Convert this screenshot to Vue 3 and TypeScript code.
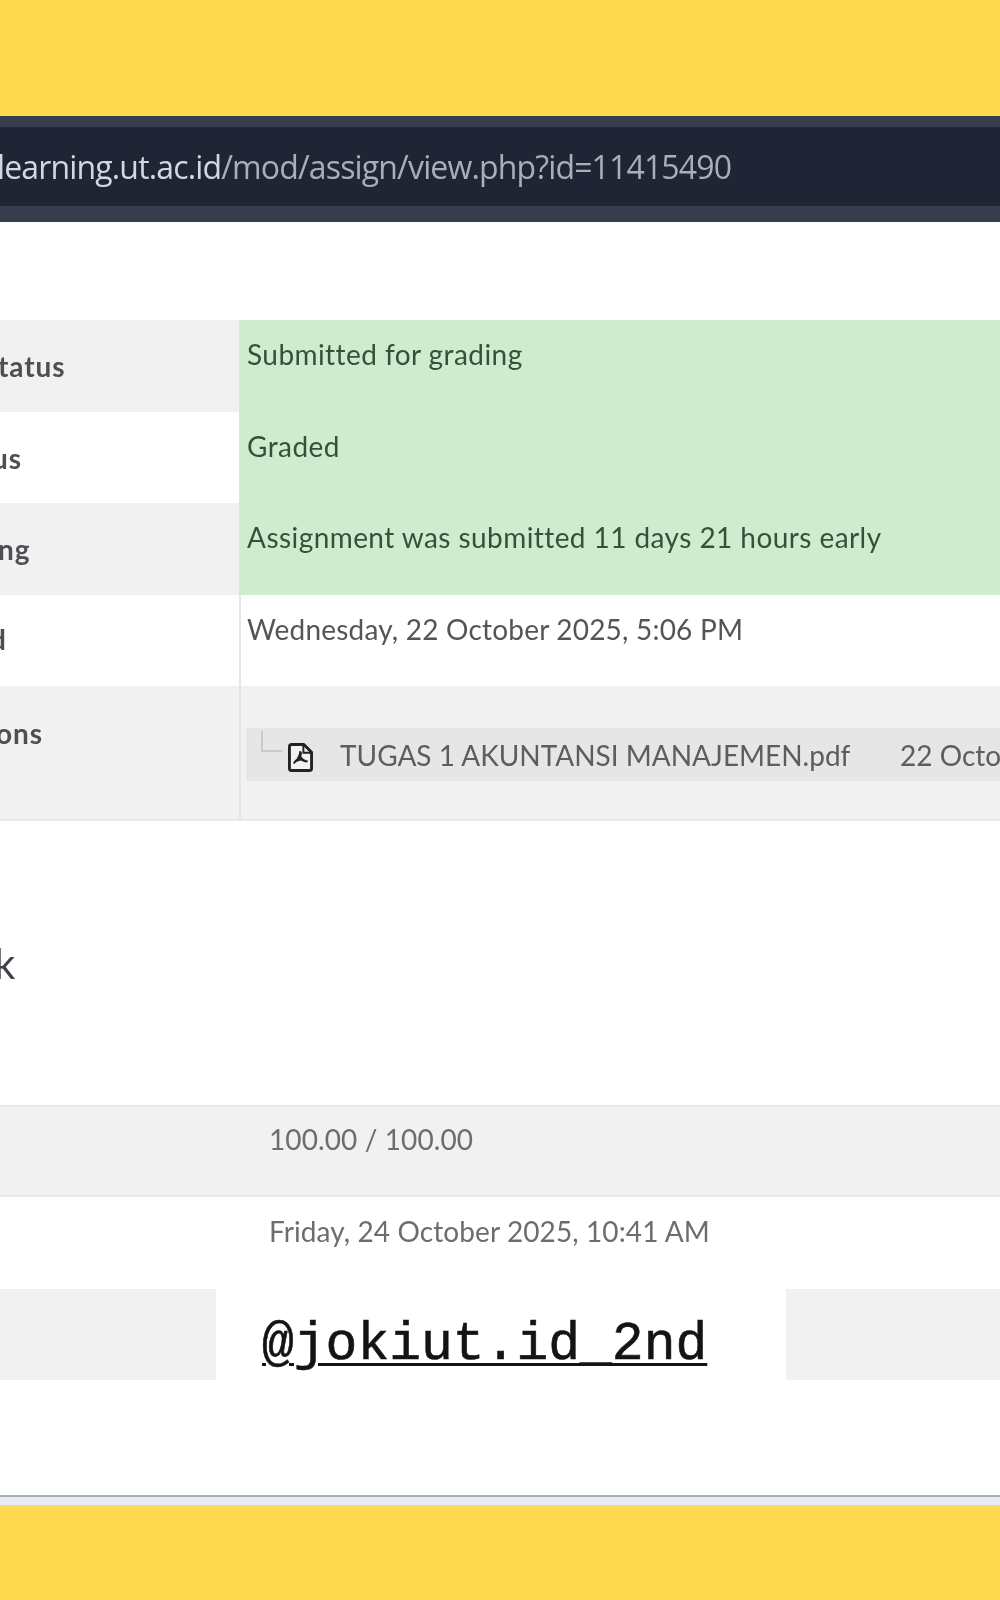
<script setup lang="ts">
interface StatusRow {
  label: string
  value: string
  labelClass: string
  striped: boolean
}

const statusRows: StatusRow[] = [
  { label: 'tatus', value: 'Submitted for grading', labelClass: 'w-status', striped: true },
  { label: 'us', value: 'Graded', labelClass: 'w-grading', striped: false },
  { label: 'ng', value: 'Assignment was submitted 11 days 21 hours early', labelClass: 'w-time', striped: true },
]
</script>

<template>
  <div class="page">
    <div class="band top-band"></div>

    <div class="urlbar">
      <div class="urlbar-inner">
        <span class="url"><span class="host">learning.ut.ac.id</span>/mod/assign/view.php?id=11415490</span>
      </div>
    </div>

    <div class="sheet">
      <section class="status-table">
        <div v-for="row in statusRows" :key="row.label" class="row" :class="{ striped: row.striped }">
          <div class="label" :class="row.labelClass">{{ row.label }}</div>
          <div class="value ok">{{ row.value }}</div>
        </div>

        <div class="row">
          <div class="label cut-d">d</div>
          <div class="value divided modified">Wednesday, 22 October 2025, 5:06 PM</div>
        </div>

        <div class="row striped files-row">
          <div class="label files-label">ons</div>
          <div class="value divided files-value">
            <div class="file">
              <span class="tree"></span>
              <svg class="pdf" viewBox="0 0 26 30" width="25" height="29" aria-hidden="true">
                <path d="M3.500 1.500h13l8 8v17a2 2 0 0 1-2 2h-19a2 2 0 0 1-2-2v-23a2 2 0 0 1 2-2z" fill="#f2f2f2" stroke="#222" stroke-width="3" stroke-linejoin="round" />
                <path d="M16 2v8h8" fill="none" stroke="#222" stroke-width="2" />
                <path d="M13 8.500c1.800 0 1.800 2.500.8 5.300 1.300 2.300 3.200 4 7 4.700.4 2-3.200 2.300-7.400-.3-2.300.4-4.900 1.300-6.900 3.600-1.700-.3-1.600-2.200 2.300-5.300 1.700-2.400 3-5.700 3-7.900-.1-.4.5-.6 1.200-.1z" fill="#222" />
              </svg>
              <span class="file-name">TUGAS 1 AKUNTANSI MANAJEMEN.pdf</span>
              <span class="file-date">22 October 2025, 5:06 PM</span>
            </div>
          </div>
        </div>
      </section>

      <h3 class="feedback">k</h3>

      <section class="grade-table">
        <div class="grade-row striped">
          <div class="grade-value">100.00 / 100.00</div>
        </div>
        <div class="grade-row">
          <div class="grade-value">Friday, 24 October 2025, 10:41 AM</div>
        </div>
        <div class="last-row">
          <div class="stripe"></div>
          <div class="watermark"><span>@jokiut.id_2nd</span></div>
          <div class="stripe"></div>
        </div>
      </section>
    </div>

    <div class="band bottom-band"></div>
  </div>
</template>

<style>
html, body {
  margin: 0;
  background: #ffd94f;
}
</style>

<style scoped>
.page {
  width: 1000px;
  height: 1600px;
  overflow: hidden;
  display: flex;
  flex-direction: column;
  font-family: "Lato", "Noto Sans", sans-serif;
  filter: blur(0.45px);
}

.band {
  background: #ffd94f;
}

.top-band {
  height: 116px;
}

.bottom-band {
  height: 95px;
}

.urlbar {
  height: 106px;
  box-sizing: border-box;
  padding: 11px 0 16px;
  background: #373d4b;
}

.urlbar-inner {
  height: 79px;
  display: flex;
  align-items: center;
  background: #1f2534;
  overflow: hidden;
}

.url {
  margin-left: -3px;
  font-family: "Open Sans", sans-serif;
  font-size: 32px;
  letter-spacing: -0.85px;
  color: #a9aeb9;
  white-space: nowrap;
}

.host {
  color: #d3d7df;
}

.sheet {
  height: 1283px;
  box-sizing: border-box;
  padding-top: 98px;
  background: #fff;
  border-bottom: 8px solid #e9ebf6;
  box-shadow: inset 0 -2px 0 #a9b0b4;
}

.status-table {
  height: 501px;
  display: flex;
  flex-direction: column;
  border-bottom: 2px solid #e9e9e9;
  box-sizing: border-box;
}

.row {
  display: grid;
  grid-template-columns: 239px 1fr;
  height: 91.5px;
  font-size: 28px;
  letter-spacing: 0.43px;
  color: #555;
}

.row.striped {
  background: #f1f1f1;
}

.label {
  box-sizing: border-box;
  padding-top: 29px;
  font-weight: 700;
  font-size: 28px;
  letter-spacing: 0.9px;
  color: #4c4f53;
  white-space: nowrap;
}

.w-status {
  margin-left: -2px;
}

.w-grading {
  margin-left: -8px;
}

.w-time {
  margin-left: -2px;
}

.cut-d {
  margin-left: -10px;
  padding-top: 27px;
}

.files-label {
  margin-left: -4px;
  padding-top: 30px;
}

.value {
  box-sizing: border-box;
  padding: 17px 0 0 8px;
  white-space: nowrap;
  overflow: hidden;
}

.ok {
  background: #cfeccf;
  color: #36503c;
}

.divided {
  border-left: 2px solid #e6e6e6;
  padding-left: 6px;
}

.modified {
  letter-spacing: 0.2px;
}

.files-row {
  height: 134px;
  flex: 1;
  background: #f2f2f2;
}

.files-value {
  padding: 42px 0 0 5px;
}

.file {
  height: 53px;
  display: flex;
  align-items: center;
  background: #e6e6e6;
  color: #5b5d61;
  white-space: nowrap;
  letter-spacing: 0;
}

.tree {
  width: 21px;
  height: 21px;
  margin: -26px 6px 0 15px;
  flex: none;
  border-left: 2px solid #cacaca;
  border-bottom: 2px solid #cacaca;
  box-sizing: border-box;
}

.pdf {
  flex: none;
  margin-top: 5px;
}

.file-name {
  margin-left: 27px;
  width: 509px;
  flex: none;
}

.file-date {
  margin-left: 51px;
}

.feedback {
  margin: 0;
  height: 284px;
  box-sizing: border-box;
  padding-top: 117px;
  font-size: 42px;
  line-height: 50px;
  font-weight: 400;
  color: #3f4246;
  overflow: hidden;
  text-indent: -6px;
}

.grade-table {
  display: flex;
  flex-direction: column;
}

.grade-row {
  height: 92px;
  box-sizing: border-box;
  padding: 17px 0 0 269px;
  font-size: 28px;
  letter-spacing: 0.1px;
  color: #6b6d70;
}

.grade-row.striped {
  background: #f1f1f1;
  border-top: 2px solid #e9e9e9;
  border-bottom: 2px solid #e9e9e9;
  padding-top: 15px;
}

.last-row {
  display: grid;
  grid-template-columns: 216px 570px 1fr;
  height: 91px;
}

.stripe {
  background: #f1f1f1;
}

.watermark {
  padding: 26px 0 0 46px;
  font-family: "Liberation Mono", monospace;
  font-size: 53px;
  line-height: 60px;
  color: #141414;
  -webkit-text-stroke: 0.6px #141414;
}

.watermark span {
  text-decoration: underline;
  text-decoration-thickness: 3px;
  text-underline-offset: 4px;
}
</style>
